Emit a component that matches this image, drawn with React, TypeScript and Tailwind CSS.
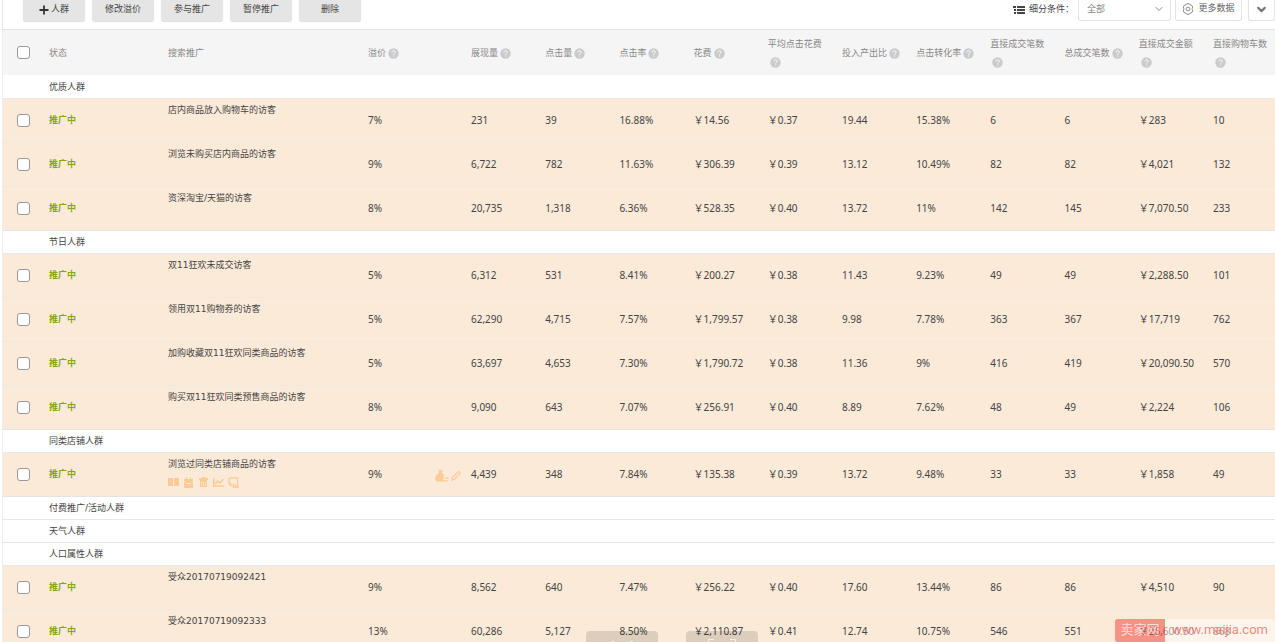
import { ChevronDown } from 'lucide-react';

type Crowd = {
  name: string;
  premium: string;
  values: string[];
  hovered?: boolean;
};

type Group = {
  title: string;
  rows: Crowd[];
};

const columns = [
  '展现量',
  '点击量',
  '点击率',
  '花费',
  '平均点击花费',
  '投入产出比',
  '点击转化率',
  '直接成交笔数',
  '总成交笔数',
  '直接成交金额',
  '直接购物车数',
];

const groups: Group[] = [
  {
    title: '优质人群',
    rows: [
      { name: '店内商品放入购物车的访客', premium: '7%', values: ['231', '39', '16.88%', '￥14.56', '￥0.37', '19.44', '15.38%', '6', '6', '￥283', '10'] },
      { name: '浏览未购买店内商品的访客', premium: '9%', values: ['6,722', '782', '11.63%', '￥306.39', '￥0.39', '13.12', '10.49%', '82', '82', '￥4,021', '132'] },
      { name: '资深淘宝/天猫的访客', premium: '8%', values: ['20,735', '1,318', '6.36%', '￥528.35', '￥0.40', '13.72', '11%', '142', '145', '￥7,070.50', '233'] },
    ],
  },
  {
    title: '节日人群',
    rows: [
      { name: '双11狂欢未成交访客', premium: '5%', values: ['6,312', '531', '8.41%', '￥200.27', '￥0.38', '11.43', '9.23%', '49', '49', '￥2,288.50', '101'] },
      { name: '领用双11购物券的访客', premium: '5%', values: ['62,290', '4,715', '7.57%', '￥1,799.57', '￥0.38', '9.98', '7.78%', '363', '367', '￥17,719', '762'] },
      { name: '加购收藏双11狂欢同类商品的访客', premium: '5%', values: ['63,697', '4,653', '7.30%', '￥1,790.72', '￥0.38', '11.36', '9%', '416', '419', '￥20,090.50', '570'] },
      { name: '购买双11狂欢同类预售商品的访客', premium: '8%', values: ['9,090', '643', '7.07%', '￥256.91', '￥0.40', '8.89', '7.62%', '48', '49', '￥2,224', '106'] },
    ],
  },
  {
    title: '同类店铺人群',
    rows: [
      { name: '浏览过同类店铺商品的访客', premium: '9%', hovered: true, values: ['4,439', '348', '7.84%', '￥135.38', '￥0.39', '13.72', '9.48%', '33', '33', '￥1,858', '49'] },
    ],
  },
  { title: '付费推广/活动人群', rows: [] },
  { title: '天气人群', rows: [] },
  {
    title: '人口属性人群',
    rows: [
      { name: '受众20170719092421', premium: '9%', values: ['8,562', '640', '7.47%', '￥256.22', '￥0.40', '17.60', '13.44%', '86', '86', '￥4,510', '90'] },
      { name: '受众20170719092333', premium: '13%', values: ['60,286', '5,127', '8.50%', '￥2,110.87', '￥0.41', '12.74', '10.75%', '546', '551', '￥26,600.50', '868'] },
    ],
  },
];

function HelpIcon() {
  return (
    <svg viewBox="0 0 11 11" className="inline-block w-[11px] h-[11px] ml-0.5 align-middle" aria-hidden="true">
      <circle cx="5.5" cy="5.5" r="5.2" fill="#cbcbcb" />
      <path d="M3.9 4.4c0-2.2 3.3-2.2 3.3-.2 0 1.1-1.6 1.2-1.6 2.4M5.6 7.5v1" fill="none" stroke="#fff" strokeWidth="1" />
    </svg>
  );
}

function PlusIcon() {
  return (
    <svg viewBox="0 0 10 10" className="w-[10px] h-[10px]" fill="none" stroke="#333" strokeWidth="1.8" aria-hidden="true">
      <path d="M5 .5v9M.5 5h9" />
    </svg>
  );
}

function GearIcon() {
  return (
    <svg viewBox="0 0 12 12" className="w-3 h-3" fill="none" stroke="#8a8a8a" strokeWidth="1" aria-hidden="true">
      <path d="M4.8.7h2.400l.8 1.200 1.500.2 1.200 2-.5 1.400v1l.5 1.400-1.200 2-1.500.2-.8 1.200H4.800L4 10.100l-1.500-.2-1.200-2 .5-1.400v-1l-.5-1.400 1.200-2L4 1.900z" />
      <circle cx="6" cy="6" r="1.900" />
    </svg>
  );
}

function ListIcon() {
  return (
    <svg viewBox="0 0 12 10" className="w-3 h-[10px]" fill="#444" aria-hidden="true">
      <path d="M0 1h3v2H0zM4 1h8v2H4zM1 4h2v2H1zM4 4h8v2H4zM1 7h2v2H1zM4 7h8v2H4z" />
    </svg>
  );
}

function RowActions() {
  return (
    <div className="flex gap-1 mt-1.5 text-[#fbcb95]">
      <button type="button" aria-label="详情">
        <svg viewBox="0 0 11 11" className="w-[11px] h-[11px]" fill="currentColor">
          <path d="M0 1h5v8H0zM6 1h5v8H6z" />
        </svg>
      </button>
      <button type="button" aria-label="暂停">
        <svg viewBox="0 0 11 11" className="w-[11px] h-[11px]" fill="currentColor">
          <path fillRule="evenodd" d="M3 0h1v2h3V0h1v2h2v2l-1 1 1 1v5H1V6l1-1-1-1V2h2zM3 6h5v1H3z" />
        </svg>
      </button>
      <button type="button" aria-label="删除">
        <svg viewBox="0 0 11 11" className="w-[11px] h-[11px]" fill="currentColor">
          <path fillRule="evenodd" d="M4 0h3v1h3v2H1V1h3zM2 3h7v7H2zM3.500 4.500v4.500h.6V4.500zM5.200 4.500v4.500h.6V4.500zM6.900 4.500v4.500h.6V4.500z" />
        </svg>
      </button>
      <button type="button" aria-label="报表">
        <svg viewBox="0 0 11 11" className="w-[11px] h-[11px]" fill="none" stroke="currentColor" strokeWidth="1.6">
          <path d="M.8 1v8H11M2.500 7l2.300-3 2 2L10.500 2" />
        </svg>
      </button>
      <button type="button" aria-label="数据">
        <svg viewBox="0 0 11 11" className="w-[11px] h-[11px]" fill="none" stroke="currentColor" strokeWidth="1.4">
          <path d="M3.500 7H1.200V1h8.300v4M4.500 10h6.500M5.500 6.500V10M7.500 7.500V10M9.500 5v5M1.500 7l2 2.500" />
        </svg>
      </button>
    </div>
  );
}

function PremiumActions() {
  return (
    <span className="flex gap-0.5 items-center pt-1 text-[#fbcb95]">
      <button type="button" aria-label="溢价助手">
        <svg viewBox="0 0 14 12" className="w-[14px] h-3" fill="currentColor">
          <path d="M3.500 0h4L6.800 3c1.900.7 2.400 2 2.400 4H8v4.500H2C-.8 11-.4 5 4.200 3z" />
          <path d="M8.500 8.200h5M8.500 10.800h5M12 7l1.500 1.200M10 12l-1.500-1.200" fill="none" stroke="currentColor" strokeWidth="1" />
        </svg>
      </button>
      <button type="button" aria-label="修改溢价">
        <svg viewBox="0 0 10 10" className="w-[10px] h-[10px]" fill="none" stroke="currentColor" strokeWidth="1.200">
          <path d="M1 9l.6-2.700L7 1c1-.8 2.600.8 1.800 1.800L3.600 8.200z" />
        </svg>
      </button>
    </span>
  );
}

function Checkbox({ label }: { label: string }) {
  return (
    <input
      type="checkbox"
      aria-label={label}
      className="block appearance-none w-[13px] h-[13px] ml-3.5 rounded-[3px] border border-[#999] bg-white checked:bg-[#7fa50b]"
    />
  );
}

function Toolbar() {
  const btn = 'w-[62px] h-[21px] pb-0.5 flex items-center justify-center gap-0.5 rounded-b-[3px] bg-[#e5e5e5] shadow-[0_1px_1px_#ddd]';
  const box = 'h-[21px] border border-t-0 border-[#e3e3e3] rounded-b-[3px] bg-white';

  return (
    <div className="flex items-start justify-between h-[29px] ml-0.5 pl-5 border-l border-[#e6e6e6]">
      <div className="flex gap-[7px]">
        <button type="button" className={btn}>
          <PlusIcon />
          人群
        </button>
        <button type="button" className={btn}>修改溢价</button>
        <button type="button" className={btn}>参与推广</button>
        <button type="button" className={btn}>暂停推广</button>
        <button type="button" className={btn}>删除</button>
      </div>
      <div className="flex">
        <label htmlFor="segment" className="flex items-center gap-1 h-[21px] pb-0.5 mr-1">
          <ListIcon />
          细分条件：
        </label>
        <div className="relative mr-1">
          <select id="segment" className={`${box} w-[93px] pl-2 appearance-none text-[#888]`}>
            <option>全部</option>
          </select>
          <ChevronDown size={12} strokeWidth={2} className="absolute right-1.5 top-[3px] text-[#888] pointer-events-none" />
        </div>
        <button type="button" className={`${box} w-[67px] pb-0.5 mr-1.5 flex items-center justify-center gap-1 text-[#666]`}>
          <GearIcon />
          更多数据
        </button>
        <button type="button" aria-label="展开" className={`${box} w-[27px] pb-0.5 flex items-center justify-center text-[#777]`}>
          <ChevronDown size={13} strokeWidth={4} />
        </button>
      </div>
    </div>
  );
}

function GroupRows({ group }: { group: Group }) {
  return (
    <tbody>
      <tr className="h-[23px] border-b border-[#e8e8e8]">
        <td />
        <th colSpan={14} scope="rowgroup" className="pt-0.5 text-left font-normal">{group.title}</th>
      </tr>
      {group.rows.map((row) => (
        <tr key={row.name} className="h-11 bg-[#fbead8] border-b border-[#ede8e3] last:border-[#e6e4e0]">
          <td><Checkbox label={row.name} /></td>
          <td className="pt-0.5 font-bold text-[#82a80f]">推广中</td>
          <td className="align-top pt-1">
            <div className="leading-[14px]">{row.name}</div>
            {row.hovered && <RowActions />}
          </td>
          <td className="text-[10px] font-['Noto_Sans','Noto_Sans_CJK_SC',sans-serif]">
            <div className="flex items-center justify-between pr-2.5">
              {row.premium}
              {row.hovered && <PremiumActions />}
            </div>
          </td>
          {row.values.map((value, i) => (
            <td key={columns[i]} className="text-[10px] font-['Noto_Sans','Noto_Sans_CJK_SC',sans-serif] whitespace-nowrap">{value}</td>
          ))}
        </tr>
      ))}
    </tbody>
  );
}

function CrowdTable() {
  return (
    <table className="table-fixed border-collapse w-full">
      <colgroup>
        <col className="w-[46px]" />
        <col className="w-[119px]" />
        <col className="w-[200px]" />
        <col className="w-[103px]" />
        {columns.map((name, i) => (
          <col key={name} className={i === columns.length - 1 ? 'w-[62px]' : ''} />
        ))}
      </colgroup>
      <thead>
        <tr className="h-[45px] bg-[#f5f5f5] text-[#888] text-left leading-[18px]">
          <th><Checkbox label="全选" /></th>
          <th className="font-normal">状态</th>
          <th className="font-normal">搜索推广</th>
          <th className="font-normal">溢价<HelpIcon /></th>
          {columns.map((name) => (
            <th key={name} className="font-normal pr-2.5 last:pr-0">{name}<HelpIcon /></th>
          ))}
        </tr>
      </thead>
      {groups.map((group) => (
        <GroupRows key={group.title} group={group} />
      ))}
    </table>
  );
}

function FloatingTabs() {
  return (
    <div className="absolute bottom-0 left-[586px] flex gap-7 pointer-events-none">
      <div className="flex justify-center w-[72px] h-[11px] rounded-t-[4px] bg-black/12">
        <svg viewBox="0 0 28 3" className="w-7 h-[3px] mt-2" fill="none" stroke="#f6ede3">
          <path d="M6 2l-3 1M22 2l3 1" />
        </svg>
      </div>
      <div className="flex justify-center w-[72px] h-[11px] rounded-t-[4px] bg-black/12">
        <svg viewBox="0 0 28 3" className="w-7 h-[3px] mt-2" fill="none" stroke="#f6ede3">
          <path d="M.5 3V.5H6M22 .5h5.500V3" />
        </svg>
      </div>
    </div>
  );
}

function Watermark() {
  return (
    <div className="absolute bottom-0 right-0 flex h-[23px] leading-[22px] rounded-[3px] overflow-hidden pointer-events-none">
      <span className="w-[50px] text-center text-[13px] text-white/70 bg-[#f2564f]/60">卖家网</span>
      <span className="w-[110px] text-center text-[13px] text-[#ee6d66]/80 bg-white/50 font-[Roboto,sans-serif]">www.maijia.com</span>
    </div>
  );
}

export default function App() {
  return (
    <div className="relative h-screen overflow-hidden bg-white text-[9px] text-[#444] font-['DejaVu_Sans','Noto_Sans_CJK_SC',sans-serif]">
      <Toolbar />
      <div className="ml-0.5 border-l border-t border-l-[#eee] border-t-[#e2e2e2]">
        <CrowdTable />
      </div>
      <FloatingTabs />
      <Watermark />
    </div>
  );
}
